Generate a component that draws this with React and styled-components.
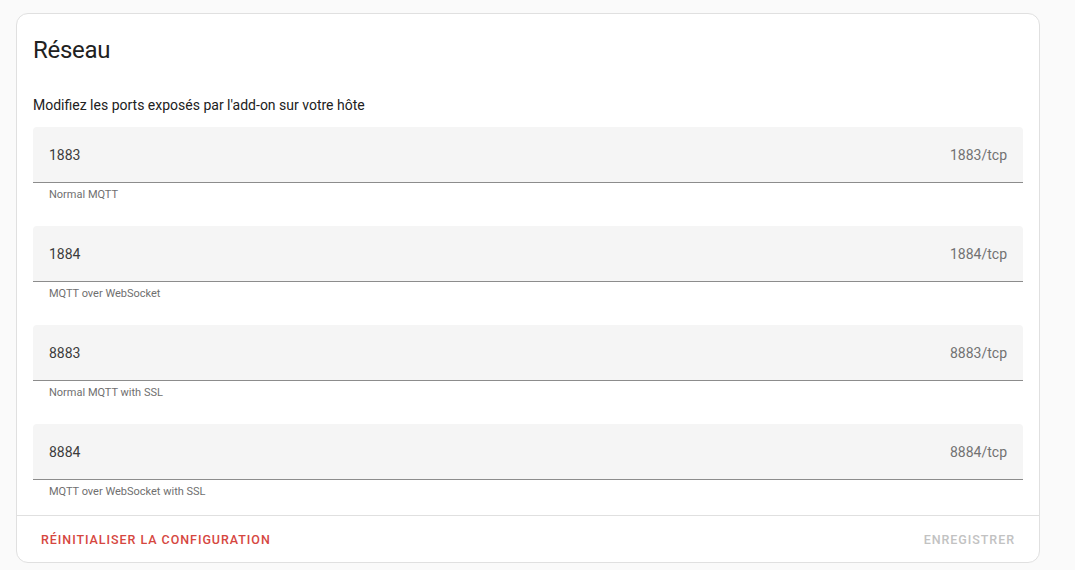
import React from "react";
import styled, { createGlobalStyle } from "styled-components";

const GlobalStyle = createGlobalStyle`
  html, body {
    margin: 0;
    padding: 0;
    background-color: #fafafa;
    font-family: Roboto, "Noto Sans", "Liberation Sans", sans-serif;
    -webkit-font-smoothing: antialiased;
  }
`;

const Page = styled.div`
  padding: 13px 16px;
`;

const Card = styled.section`
  width: 1024px;
  box-sizing: border-box;
  background-color: #ffffff;
  border: 1px solid #e0e0e0;
  border-radius: 12px;
`;

const CardBody = styled.div`
  padding: 20px 16px 16px;
`;

const Title = styled.h1`
  margin: 0;
  font-size: 24px;
  font-weight: 400;
  line-height: 32px;
  letter-spacing: -0.012em;
  color: #212121;
`;

const Description = styled.p`
  margin: 29px 0 12px;
  font-size: 14px;
  line-height: 20px;
  color: #212121;
`;

const FieldList = styled.div`
  display: flex;
  flex-direction: column;
  gap: 24px;
`;

const Field = styled.div`
  display: flex;
  flex-direction: column;
`;

const InputBox = styled.div`
  height: 56px;
  display: flex;
  align-items: center;
  justify-content: space-between;
  padding: 0 16px;
  box-sizing: border-box;
  background-color: #f5f5f5;
  border-bottom: 1px solid #8c8c8c;
  border-radius: 4px 4px 0 0;
  font-size: 14px;
  line-height: 20px;
`;

const Value = styled.span`
  color: #3c3c3c;
`;

const Suffix = styled.span`
  color: #727272;
`;

const Helper = styled.div`
  padding: 5px 16px 0;
  font-size: 11px;
  line-height: 14px;
  color: #6f6f6f;
`;

const Actions = styled.div`
  display: flex;
  justify-content: space-between;
  align-items: center;
  padding: 5px 16px;
  border-top: 1px solid #e0e0e0;
`;

const TextButton = styled.button`
  height: 36px;
  padding: 0 8px;
  border: none;
  background: none;
  font-family: inherit;
  font-size: 12.5px;
  font-weight: 500;
  letter-spacing: 0.95px;
  text-transform: uppercase;
  color: ${(p) => (p.$danger ? "#d6473f" : "#c2c2c2")};
  cursor: ${(p) => (p.disabled ? "default" : "pointer")};
`;

const ports = [
  { value: "1883", suffix: "1883/tcp", helper: "Normal MQTT" },
  { value: "1884", suffix: "1884/tcp", helper: "MQTT over WebSocket" },
  { value: "8883", suffix: "8883/tcp", helper: "Normal MQTT with SSL" },
  { value: "8884", suffix: "8884/tcp", helper: "MQTT over WebSocket with SSL" },
];

const PortField = ({ value, suffix, helper }) => (
  <Field>
    <InputBox>
      <Value>{value}</Value>
      <Suffix>{suffix}</Suffix>
    </InputBox>
    <Helper>{helper}</Helper>
  </Field>
);

export default function App() {
  return (
    <>
      <GlobalStyle />
      <Page>
        <Card>
          <CardBody>
            <Title>Réseau</Title>
            <Description>
              Modifiez les ports exposés par l'add-on sur votre hôte
            </Description>
            <FieldList>
              {ports.map((p) => (
                <PortField key={p.value} {...p} />
              ))}
            </FieldList>
          </CardBody>
          <Actions>
            <TextButton $danger>Réinitialiser la configuration</TextButton>
            <TextButton disabled>Enregistrer</TextButton>
          </Actions>
        </Card>
      </Page>
    </>
  );
}
